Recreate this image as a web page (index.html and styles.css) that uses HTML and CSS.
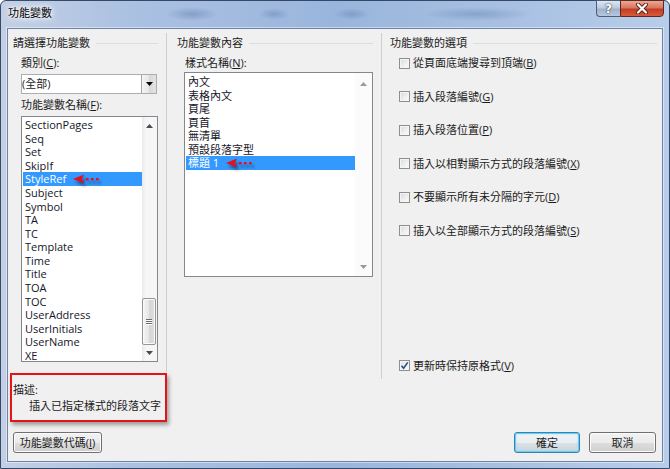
FILE: index.html
```html
<!DOCTYPE html>
<html>
<head>
<meta charset="utf-8">
<link rel="stylesheet" href="styles.css">
</head>
<body>
<div class="win">
  <div class="titlebar">
    <span class="title">功能變數</span>
    <div class="capbtns">
      <div class="cap help">?</div>
      <div class="cap close">
        <svg width="14" height="11" viewBox="0 0 14 11"><path d="M3 1.5 L11 9.5 M11 1.5 L3 9.5" stroke="#5a2116" stroke-width="4" stroke-linecap="round"/><path d="M3 1.5 L11 9.5 M11 1.5 L3 9.5" stroke="#fff" stroke-width="2.2" stroke-linecap="round"/></svg>
      </div>
    </div>
  </div>
  <div class="client">
    <div class="cols">
      <div class="leftgrp">
        <div class="col col1">
          <div class="ghead"><span>請選擇功能變數</span><i></i></div>
          <div class="inner">
            <div class="lbl">類別(<u>C</u>):</div>
            <div class="combo">
              <span class="cval">(全部)</span>
              <div class="ddbtn"><svg width="7" height="4" viewBox="0 0 7 4"><path d="M0 0 L7 0 L3.5 4Z" fill="#000"/></svg></div>
            </div>
            <div class="lbl">功能變數名稱(<u>F</u>):</div>
            <div class="listbox lb1">
              <ul class="items">
                <li>SectionPages</li>
                <li>Seq</li>
                <li>Set</li>
                <li>SkipIf</li>
                <li class="sel">StyleRef
                  <svg class="redarrow" width="28" height="10" viewBox="0 0 28 10"><path d="M0 5 L11 0.5 L9 5 L11 9.5Z" fill="#e4101c"/><rect x="13" y="4" width="2.6" height="2.4" fill="#e4101c"/><rect x="18" y="4" width="2.6" height="2.4" fill="#e4101c"/><rect x="23" y="4" width="2.6" height="2.4" fill="#e4101c"/></svg>
                </li>
                <li>Subject</li>
                <li>Symbol</li>
                <li>TA</li>
                <li>TC</li>
                <li>Template</li>
                <li>Time</li>
                <li>Title</li>
                <li>TOA</li>
                <li>TOC</li>
                <li>UserAddress</li>
                <li>UserInitials</li>
                <li>UserName</li>
                <li>XE</li>
              </ul>
              <div class="vscroll">
                <div class="sbtn up"><svg width="7" height="4" viewBox="0 0 7 4"><path d="M0 4 L3.5 0 L7 4Z" fill="#4a4a4a"/></svg></div>
                <div class="track">
                  <div class="thumb">
                    <span class="grip"></span><span class="grip"></span><span class="grip"></span>
                  </div>
                </div>
                <div class="sbtn down"><svg width="7" height="4" viewBox="0 0 7 4"><path d="M0 0 L7 0 L3.5 4Z" fill="#4a4a4a"/></svg></div>
              </div>
            </div>
          </div>
        </div>
        <div class="desc">
          <div class="d1">描述:</div>
          <div class="d2">插入已指定樣式的段落文字</div>
        </div>
      </div>

      <div class="col col2">
        <div class="ghead"><span>功能變數內容</span><i></i></div>
        <div class="inner">
          <div class="lbl">樣式名稱(<u>N</u>):</div>
          <div class="listbox lb2">
            <ul class="items">
              <li>內文</li>
              <li>表格內文</li>
              <li>頁尾</li>
              <li>頁首</li>
              <li>無清單</li>
              <li>預設段落字型</li>
              <li class="sel">標題 1
                <svg class="redarrow" width="28" height="10" viewBox="0 0 28 10"><path d="M0 5 L11 0.5 L9 5 L11 9.5Z" fill="#e4101c"/><rect x="13" y="4" width="2.6" height="2.4" fill="#e4101c"/><rect x="18" y="4" width="2.6" height="2.4" fill="#e4101c"/><rect x="23" y="4" width="2.6" height="2.4" fill="#e4101c"/></svg>
              </li>
            </ul>
            <div class="vscroll plain">
              <div class="sbtn up"><svg width="7" height="4" viewBox="0 0 7 4"><path d="M0 4 L3.5 0 L7 4Z" fill="#9a9a9a"/></svg></div>
              <div class="track"></div>
              <div class="sbtn down"><svg width="7" height="4" viewBox="0 0 7 4"><path d="M0 0 L7 0 L3.5 4Z" fill="#9a9a9a"/></svg></div>
            </div>
          </div>
        </div>
      </div>

      <div class="col col3">
        <div class="ghead"><span>功能變數的選項</span><i></i></div>
        <div class="opts">
          <div class="opt"><span class="cb"></span><span>從頁面底端搜尋到頂端(<u>B</u>)</span></div>
          <div class="opt"><span class="cb"></span><span>插入段落編號(<u>G</u>)</span></div>
          <div class="opt"><span class="cb"></span><span>插入段落位置(<u>P</u>)</span></div>
          <div class="opt"><span class="cb"></span><span>插入以相對顯示方式的段落編號(<u>X</u>)</span></div>
          <div class="opt"><span class="cb"></span><span>不要顯示所有未分隔的字元(<u>D</u>)</span></div>
          <div class="opt"><span class="cb"></span><span>插入以全部顯示方式的段落編號(<u>S</u>)</span></div>
        </div>
        <div class="opt last"><span class="cb checked"><svg width="9" height="9" viewBox="0 0 9 9"><path d="M1.5 4.8 L3.6 7.2 L7.8 1.4" fill="none" stroke="#2b4a8a" stroke-width="1.6"/></svg></span><span>更新時保持原格式(<u>V</u>)</span></div>
      </div>
    </div>

    <div class="bottom">
      <div class="btn codes">功能變數代碼(<u>I</u>)</div>
      <div class="btn def ok">確定</div>
      <div class="btn cancel">取消</div>
    </div>
  </div>
</div>
</body>
</html>
```

FILE: styles.css
```css
* { box-sizing: border-box; margin: 0; padding: 0; }
html, body { width: 670px; height: 469px; overflow: hidden; }
body {
  font-family: "Open Sans", "Noto Sans CJK TC", sans-serif;
  font-size: 11px;
  color: #1a1a1a;
  background: #ffffff;
}
ul { list-style: none; }
u { text-decoration: underline; text-underline-offset: 1px; }

.win {
  width: 670px;
  height: 469px;
  border: 1px solid #34496a;
  border-radius: 6px 6px 0 0;
  padding: 0 6px 6px 6px;
  display: flex;
  flex-direction: column;
  background:
    linear-gradient(90deg, #c3cfe4 0%, #aac1e2 20%, #9ab5dc 50%, #a7c0e2 75%, #b8cdea 100%);
}

.titlebar {
  height: 27px;
  display: flex;
  align-items: flex-start;
  background:
    radial-gradient(ellipse 26px 7px at 185px 13px, rgba(70, 100, 150, 0.35), transparent),
    radial-gradient(ellipse 16px 6px at 267px 13px, rgba(70, 100, 150, 0.3), transparent),
    radial-gradient(ellipse 18px 6px at 345px 13px, rgba(70, 100, 150, 0.3), transparent),
    radial-gradient(ellipse 55px 7px at 470px 13px, rgba(70, 100, 150, 0.3), transparent);
}
.title {
  margin: 5px 0 0 1px;
  line-height: 14px;
  color: #000;
  text-shadow: 0 0 6px #fff, 0 0 10px #fff, 0 0 3px #fff;
}
.capbtns {
  margin-left: auto;
  margin-top: -1px;
  margin-right: -1px;
  display: flex;
}
.cap {
  height: 17px;
  display: flex;
  align-items: center;
  justify-content: center;
}
.help {
  width: 24px;
  border: 1px solid #4d5e78;
  border-right: none;
  border-radius: 0 0 0 4px;
  background: linear-gradient(#dfe7f2 0%, #bccbdf 45%, #a0b2cb 55%, #b8c9de 100%);
  color: #fff;
  font-family: "DejaVu Sans", sans-serif;
  font-weight: bold;
  font-size: 12px;
  line-height: 14px;
  text-shadow: 0 0 2px #2f3d52, 0 0 1px #2f3d52;
}
.close {
  width: 44px;
  border: 1px solid #5a2a22;
  border-radius: 0 0 4px 0;
  background: linear-gradient(#eaa996 0%, #d9765f 45%, #c63c22 55%, #d65a3b 100%);
}

.client {
  flex: 1;
  background: #f0f0f0;
  border: 1px solid #6f84a5;
  box-shadow: 0 0 0 1px rgba(255, 255, 255, 0.45);
  display: flex;
  flex-direction: column;
}

.cols {
  display: flex;
  align-items: flex-start;
  padding-top: 4px;
}
.leftgrp { width: 159px; }
.col { padding-top: 3px; }
.col1 {
  height: 339px;
  border-right: 1px solid #cfcfcf;
  padding-left: 5px;
  padding-right: 8px;
}
.col2 {
  width: 215px;
  height: 346px;
  border-right: 1px solid #cfcfcf;
  padding-left: 10px;
  padding-right: 8px;
}
.col3 {
  flex: 1;
  height: 346px;
  padding-left: 8px;
  padding-right: 5px;
  padding-bottom: 6.5px;
  display: flex;
  flex-direction: column;
}

.ghead {
  display: flex;
  align-items: center;
  height: 14px;
  line-height: 14px;
  white-space: nowrap;
}
.ghead i {
  flex: 1;
  height: 1px;
  background: #d5dfe5;
  margin-left: 6px;
  margin-top: 1px;
}

.inner { padding-left: 8px; }
.lbl {
  height: 14px;
  line-height: 14px;
  margin-top: 6px;
  white-space: nowrap;
}
.col1 .lbl + .listbox { margin-top: 4px; }
.combo + .lbl { margin-top: 4px; }

.combo {
  margin-top: 4px;
  width: 136px;
  height: 20px;
  border: 1px solid #abadb3;
  background: #fff;
  display: flex;
  align-items: center;
}
.cval { padding-left: 0; line-height: 18px; }
.ddbtn {
  margin-left: auto;
  width: 15px;
  height: 18px;
  border-left: 1px solid #a7a7a7;
  background: linear-gradient(90deg, #f4f4f4 0%, #e6e6e6 50%, #d8d8d8 51%, #e3e3e3 100%);
  display: flex;
  align-items: center;
  justify-content: center;
}

.listbox {
  border: 1px solid #828790;
  background: #fff;
  display: flex;
}
.lb1 { width: 137px; height: 246px; }
.lb2 { width: 189px; height: 205px; margin-top: 2px; margin-left: -1px; }

.items { flex: 1; padding-left: 1px; }
.lb1 .items { padding-top: 1.2px; }
.lb1 .items li { height: 13.57px; line-height: 13.57px; }
.lb2 .items { padding-top: 2px; }
.lb2 .items li { height: 13.5px; line-height: 13.5px; }
.items li {
  padding-left: 2px;
  white-space: nowrap;
  color: #151528;
  position: relative;
}
.items li.sel { background: #3399ff; color: #fff; }
.redarrow {
  position: absolute;
  top: 2px;
  filter: drop-shadow(2px 3px 1.5px rgba(0, 0, 0, 0.45));
}
.lb1 .redarrow { left: 50px; }
.lb2 .redarrow { left: 40px; }

.vscroll {
  width: 15px;
  display: flex;
  flex-direction: column;
  background: linear-gradient(90deg, #e9e9e9 0%, #f6f6f6 25%, #f6f6f6 100%);
}
.lb2 .vscroll { width: 17px; }
.vscroll.plain { background: #fbfbfb; }
.sbtn {
  display: flex;
  align-items: center;
  justify-content: center;
}
.sbtn.up { height: 17px; padding-top: 1px; }
.sbtn.down { height: 16px; }
.lb2 .sbtn.up { height: 20px; padding-top: 1px; }
.lb2 .sbtn.down { height: 18px; }
.track {
  flex: 1;
  display: flex;
  flex-direction: column;
  justify-content: flex-end;
}
.thumb {
  height: 47px;
  width: 14px;
  border: 1px solid #959595;
  border-radius: 2px;
  background: linear-gradient(90deg, #f5f5f5 0%, #e8e8e8 45%, #d6d6d6 55%, #dedede 100%);
  box-shadow: inset 0 0 0 1px #fafafa;
  display: flex;
  flex-direction: column;
  align-items: center;
  justify-content: center;
  gap: 1px;
}
.grip {
  width: 6px;
  height: 1px;
  background: #6a6a6a;
  box-shadow: 0 1px 0 #ffffff;
}

.desc {
  margin-top: 1px;
  margin-left: 2px;
  width: 157px;
  height: 49px;
  border: 2px solid #e3151a;
  box-shadow: 2px 3px 4px rgba(0, 0, 0, 0.35);
  padding: 7px 0 0 1px;
  line-height: 16px;
  white-space: nowrap;
}
.d2 { padding-left: 16px; }

.opts {
  padding-left: 9px;
  display: flex;
  flex-direction: column;
  gap: 19.55px;
  margin-top: 6px;
}
.opt {
  height: 14px;
  display: flex;
  align-items: center;
  line-height: 14px;
  white-space: nowrap;
}
.opt.last { margin-top: auto; padding-left: 9px; }
.cb {
  width: 11px;
  height: 11px;
  margin-right: 3px;
  border: 1px solid #8f8f8f;
  background: linear-gradient(135deg, #d9d9d9 0%, #f0f0f0 60%, #fdfdfd 100%);
  box-shadow: inset 0 0 0 1px #f4f4f4;
  display: flex;
  align-items: center;
  justify-content: center;
  flex: none;
}
.cb.checked { background: linear-gradient(135deg, #e4e4e4 0%, #fafafa 100%); }

.bottom {
  display: flex;
  margin-top: 10px;
  padding: 0 6px 0 5px;
}
.btn {
  height: 21px;
  border: 1px solid #707070;
  border-radius: 3px;
  background: linear-gradient(#f2f2f2 0%, #ebebeb 50%, #dddddd 51%, #cfcfcf 100%);
  box-shadow: inset 0 0 0 1px #fbfbfb;
  text-align: center;
  line-height: 19px;
  white-space: nowrap;
}
.codes { width: 89px; }
.ok { width: 66px; margin-left: auto; }
.cancel { width: 67px; margin-left: 9px; }
.btn.def {
  border-color: #3c7fb1;
  box-shadow: inset 0 0 0 1px #5fd3f5, inset 0 0 2px 1px rgba(120, 210, 245, 0.5);
  background: linear-gradient(#f0f4f7 0%, #e9eef2 50%, #dae1e7 51%, #ccd5dc 100%);
}
```
